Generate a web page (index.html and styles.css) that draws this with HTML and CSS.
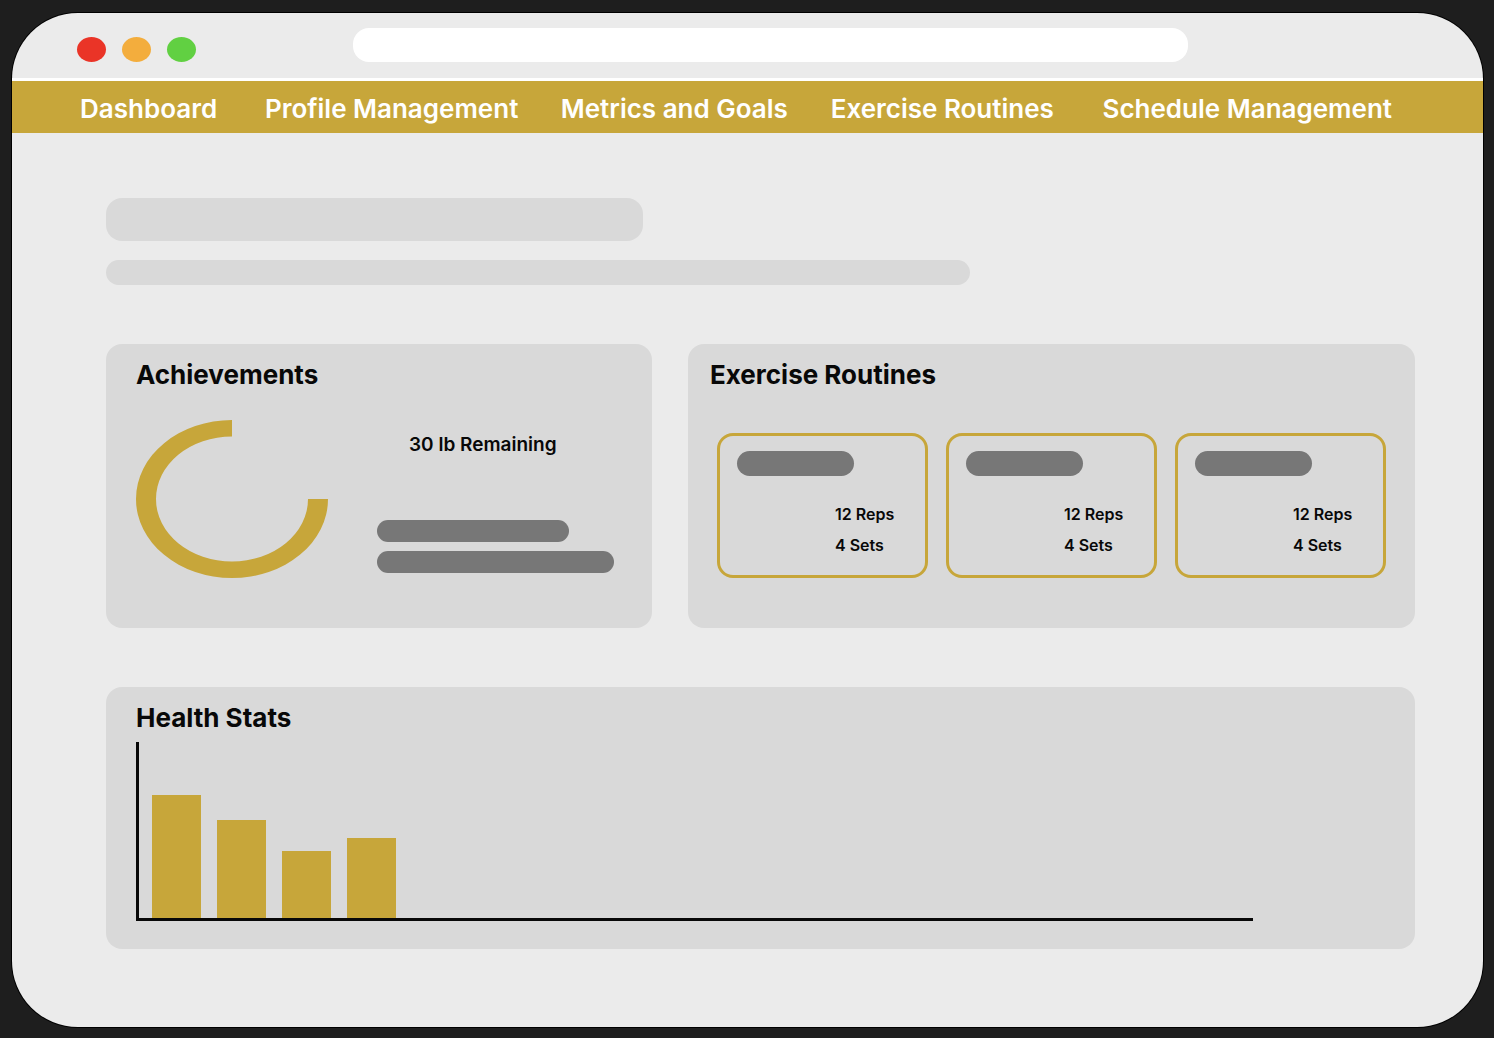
FILE: index.html
```html
<!DOCTYPE html>
<html lang="en">
<head>
  <meta charset="utf-8">
  <meta name="viewport" content="width=device-width, initial-scale=1">
  <title>Dashboard</title>
  <link rel="stylesheet" href="styles.css">
</head>
<body>
  <div class="window">
    <div class="titlebar">
      <div class="lights">
        <button class="light light-close" type="button" aria-label="Close"></button>
        <button class="light light-minimize" type="button" aria-label="Minimize"></button>
        <button class="light light-zoom" type="button" aria-label="Zoom"></button>
      </div>
      <input class="address" type="text" aria-label="Address">
    </div>

    <nav class="nav">
      <a href="#dashboard">Dashboard</a>
      <a href="#profile">Profile Management</a>
      <a href="#metrics">Metrics and Goals</a>
      <a href="#routines">Exercise Routines</a>
      <a href="#schedule">Schedule Management</a>
    </nav>

    <main class="content">
      <header class="intro">
        <div class="intro-title"></div>
        <div class="intro-text"></div>
      </header>

      <div class="panels">
        <section class="panel">
          <h2>Achievements</h2>
          <div class="progress">
            <svg class="ring" viewBox="0 0 192 158" width="192" height="158" aria-hidden="true">
              <path d="M96 0A96 79 0 1 0 192 79H172A76 62.500 0 1 1 96 16.500Z" fill="#c7a63a"/>
            </svg>
            <div class="progress-info">
              <p class="remaining">30 lb Remaining</p>
              <div class="lines">
                <div class="line line-short"></div>
                <div class="line"></div>
              </div>
            </div>
          </div>
        </section>

        <section class="panel panel-routines">
          <h2>Exercise Routines</h2>
          <div class="routines">
            <article class="routine">
              <div class="routine-name"></div>
              <p>12 Reps</p>
              <p>4 Sets</p>
            </article>
            <article class="routine">
              <div class="routine-name"></div>
              <p>12 Reps</p>
              <p>4 Sets</p>
            </article>
            <article class="routine">
              <div class="routine-name"></div>
              <p>12 Reps</p>
              <p>4 Sets</p>
            </article>
          </div>
        </section>
      </div>

      <section class="panel panel-stats">
        <h2>Health Stats</h2>
        <div class="chart">
          <div class="bar" style="height: 123px"></div>
          <div class="bar" style="height: 98px"></div>
          <div class="bar" style="height: 67px"></div>
          <div class="bar" style="height: 80px"></div>
        </div>
      </section>
    </main>
  </div>
</body>
</html>
```
FILE: styles.css
```css
:root {
  --gold: #c7a63a;
  --page: #ebebeb;
  --block: #d9d9d9;
  --bar: #777777;
}

* {
  box-sizing: border-box;
}

body {
  display: flex;
  min-height: 100vh;
  margin: 0;
  padding: 13px 11px 11px 12px;
  background: #1e1e1e;
  color: #080808;
  font-family: Inter, "Liberation Sans", sans-serif;
}

h2,
p {
  margin: 0;
}

.window {
  flex: 1;
  min-width: 0;
  border-radius: 66px;
  background: var(--page);
  box-shadow: 0 0 0 1px #000;
  overflow: hidden;
}

.titlebar {
  display: grid;
  grid-template-columns: 276fr 835fr 295fr;
  height: 68px;
  padding: 15px 0 0 65px;
  border-bottom: 3px solid #fff;
}

.lights {
  display: flex;
  gap: 16px;
  padding-top: 9px;
}

.light {
  width: 29px;
  height: 25px;
  padding: 0;
  border: 0;
  border-radius: 50%;
}

.light-close {
  background: #ea3427;
}

.light-minimize {
  background: #f3ad3d;
}

.light-zoom {
  background: #61d042;
}

.address {
  min-width: 0;
  height: 34px;
  padding: 0 16px;
  border: 0;
  border-radius: 16px;
  background: #fff;
  font: 500 16px Inter, sans-serif;
}

.nav {
  display: grid;
  grid-template-columns: 185fr 296fr 270fr 272fr 289fr;
  padding: 12px 91px 8px 68px;
  background: var(--gold);
}

.nav a {
  color: #fff;
  font-size: 26px;
  font-weight: 600;
  line-height: 32px;
  text-decoration: none;
  white-space: nowrap;
}

.content {
  padding: 65px 68px 77px 94px;
}

.intro-title {
  width: 41%;
  height: 43px;
  border-radius: 16px;
  background: var(--block);
}

.intro-text {
  width: 66%;
  height: 25px;
  margin-top: 19px;
  border-radius: 13px;
  background: var(--block);
}

.panels {
  display: grid;
  grid-template-columns: 546fr 727fr;
  gap: 36px;
  margin: 59px 0;
}

.panel {
  padding: 15px 30px 50px;
  border-radius: 16px;
  background: var(--block);
}

.panel h2 {
  font-size: 26px;
  font-weight: 700;
  line-height: 32px;
}

.progress {
  display: flex;
  gap: 49px;
  margin-top: 29px;
}

.ring {
  flex: none;
}

.progress-info {
  display: flex;
  flex: 1;
  flex-direction: column;
  justify-content: space-between;
  padding: 13px 0 5px;
}

.remaining {
  padding-left: 32px;
  font-size: 19px;
  font-weight: 600;
  line-height: 24px;
}

.lines {
  display: grid;
  gap: 9px;
}

.line {
  width: 237px;
  height: 22px;
  border-radius: 11px;
  background: var(--bar);
}

.line-short {
  width: 192px;
}

.panel-routines {
  padding: 15px 29px 50px 22px;
}

.routines {
  display: grid;
  grid-template-columns: repeat(3, 1fr);
  gap: 18px;
  margin: 42px 0 0 7px;
}

.routine {
  padding: 15px 0 14px 17px;
  border: 3px solid var(--gold);
  border-radius: 16px;
}

.routine-name {
  width: 117px;
  height: 25px;
  margin-bottom: 23px;
  border-radius: 13px;
  background: var(--bar);
}

.routine p {
  padding-left: 98px;
  font-size: 16px;
  font-weight: 600;
  line-height: 31px;
}

.panel-stats {
  padding: 15px 162px 28px 30px;
}

.chart {
  display: flex;
  align-items: flex-end;
  gap: 16px;
  height: 179px;
  margin-top: 8px;
  padding-left: 13px;
  border: solid #080808;
  border-width: 0 0 3px 3px;
}

.bar {
  width: 49px;
  background: var(--gold);
}
```
